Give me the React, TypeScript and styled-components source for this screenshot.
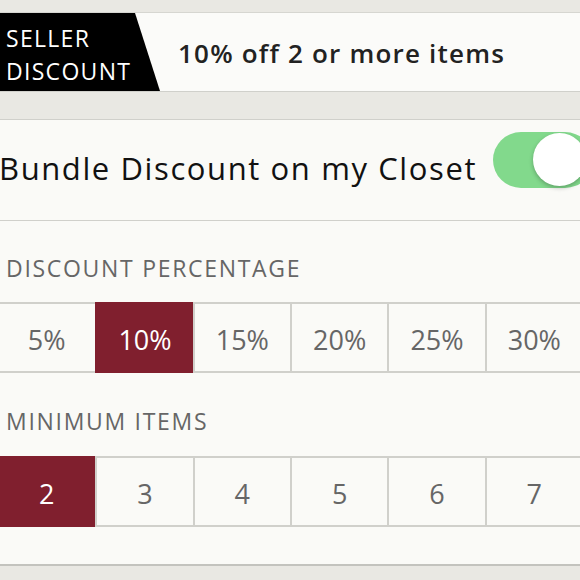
import React, { useState } from "react";
import styled, { createGlobalStyle } from "styled-components";

const Global = createGlobalStyle`
  html, body { margin: 0; padding: 0; }
  body { font-family: "Open Sans", "Lato", sans-serif; background: #e9e8e3; }
`;

const Page = styled.div`
  width: 580px;
  height: 580px;
  overflow: hidden;
  background: #e9e8e3;
  display: flex;
  flex-direction: column;
`;

const DiscountBar = styled.div`
  margin-top: 12px;
  height: 78px;
  background: #fbfbf9;
  border-top: 1px solid #d6d6d1;
  border-bottom: 1px solid #d0d0cb;
  display: flex;
  align-items: stretch;
`;

const Badge = styled.div`
  width: 160px;
  flex: none;
  background: #000;
  clip-path: polygon(0 0, 135px 0, 160px 100%, 0 100%);
  color: #fff;
  font-size: 23px;
  line-height: 33px;
  letter-spacing: 1.3px;
  padding: 9px 0 0 6px;
  box-sizing: border-box;
`;

const BarText = styled.div`
  margin-left: 18px;
  align-self: center;
  font-size: 26px;
  font-weight: 600;
  letter-spacing: 1.2px;
  color: #222;
  margin-top: 2px;
`;

const Panel = styled.div`
  margin-top: 27px;
  background: #fafaf7;
  border-top: 1px solid #d0d0cb;
  border-bottom: 2px solid #c3c3be;
  height: 444px;
  display: flex;
  flex-direction: column;
`;

const ToggleRow = styled.div`
  height: 100px;
  border-bottom: 1px solid #d0d0cb;
  display: flex;
  align-items: center;
  justify-content: space-between;
`;

const ToggleLabel = styled.div`
  font-size: 31px;
  letter-spacing: 1.6px;
  color: #111;
  margin-left: -1px;
  margin-top: -4px;
  white-space: nowrap;
`;

const Switch = styled.div<{ $on: boolean }>`
  width: 100px;
  height: 56px;
  border-radius: 28px;
  background: ${(p) => (p.$on ? "#82d98c" : "#ddd")};
  margin-right: -13px;
  margin-top: -20px;
  position: relative;
  flex: none;
`;

const Knob = styled.div`
  position: absolute;
  top: 1px;
  left: 40px;
  width: 53px;
  height: 53px;
  border-radius: 50%;
  background: #fff;
  box-shadow: 0 2px 4px rgba(0, 0, 0, 0.25);
`;

const SectionLabel = styled.div`
  font-size: 23px;
  letter-spacing: 1.7px;
  color: #666;
  padding-left: 6px;
  line-height: 28px;
`;

const Segments = styled.div`
  display: grid;
  grid-template-columns: repeat(6, 1fr);
  width: 584px;
  margin-left: -2px;
  height: 71px;
  box-sizing: border-box;
  border-top: 2px solid #d0d0cb;
  border-bottom: 2px solid #d0d0cb;
`;

const Segment = styled.div<{ $active: boolean }>`
  display: flex;
  align-items: center;
  justify-content: center;
  font-size: 27px;
  padding-top: 4px;
  color: ${(p) => (p.$active ? "#fff" : "#666")};
  background: ${(p) => (p.$active ? "#801f2e" : "transparent")};
  border-left: 2px solid ${(p) => (p.$active ? "#801f2e" : "#d0d0cb")};
  margin-top: ${(p) => (p.$active ? "-2px" : "0")};
  margin-bottom: ${(p) => (p.$active ? "-2px" : "0")};
  &:first-child { border-left: none; }
`;

export default function App() {
  const [pct, setPct] = useState("10%");
  const [min, setMin] = useState("2");
  const [on, setOn] = useState(true);
  const pcts = ["5%", "10%", "15%", "20%", "25%", "30%"];
  const mins = ["2", "3", "4", "5", "6", "7"];
  return (
    <>
      <Global />
      <Page>
        <DiscountBar>
          <Badge>
            SELLER
            <br />
            DISCOUNT
          </Badge>
          <BarText>10% off 2 or more items</BarText>
        </DiscountBar>
        <Panel>
          <ToggleRow>
            <ToggleLabel>Bundle Discount on my Closet</ToggleLabel>
            <Switch $on={on} onClick={() => setOn(!on)}>
              <Knob />
            </Switch>
          </ToggleRow>
          <SectionLabel style={{ marginTop: 33 }}>DISCOUNT PERCENTAGE</SectionLabel>
          <Segments style={{ marginTop: 20 }}>
            {pcts.map((p) => (
              <Segment key={p} $active={p === pct} onClick={() => setPct(p)}>
                {p}
              </Segment>
            ))}
          </Segments>
          <SectionLabel style={{ marginTop: 34 }}>MINIMUM ITEMS</SectionLabel>
          <Segments style={{ marginTop: 21 }}>
            {mins.map((m) => (
              <Segment key={m} $active={m === min} onClick={() => setMin(m)}>
                {m}
              </Segment>
            ))}
          </Segments>
        </Panel>
      </Page>
    </>
  );
}
